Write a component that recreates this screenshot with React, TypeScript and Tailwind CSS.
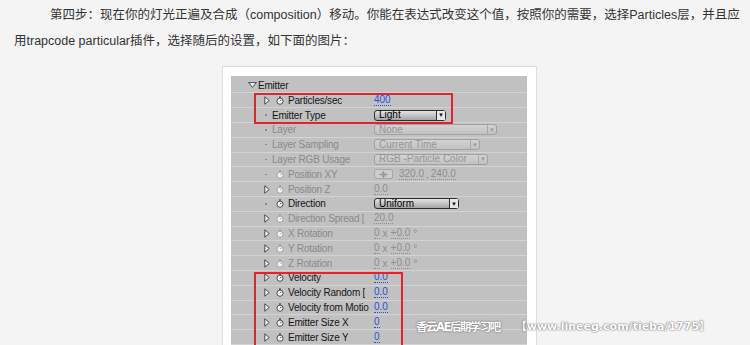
import React from 'react';

type Row = {
  label: string;
  lead: 'arrow' | 'dot';
  watch?: boolean;
  on?: boolean;
  kind: 'num' | 'drop' | 'xy' | 'rot';
  value?: string;
  width?: number;
};

const rows: Row[] = [
  { label: 'Particles/sec', lead: 'arrow', watch: true, on: true, kind: 'num', value: '400' },
  { label: 'Emitter Type', lead: 'dot', on: true, kind: 'drop', value: 'Light', width: 72 },
  { label: 'Layer', lead: 'dot', kind: 'drop', value: 'None', width: 123 },
  { label: 'Layer Sampling', lead: 'dot', kind: 'drop', value: 'Current Time', width: 106 },
  { label: 'Layer RGB Usage', lead: 'dot', kind: 'drop', value: 'RGB -Particle Color', width: 114 },
  { label: 'Position XY', lead: 'dot', watch: true, kind: 'xy' },
  { label: 'Position Z', lead: 'arrow', watch: true, kind: 'num', value: '0.0' },
  { label: 'Direction', lead: 'dot', watch: true, on: true, kind: 'drop', value: 'Uniform', width: 85 },
  { label: 'Direction Spread [', lead: 'arrow', watch: true, kind: 'num', value: '20.0' },
  { label: 'X Rotation', lead: 'arrow', watch: true, kind: 'rot' },
  { label: 'Y Rotation', lead: 'arrow', watch: true, kind: 'rot' },
  { label: 'Z Rotation', lead: 'arrow', watch: true, kind: 'rot' },
  { label: 'Velocity', lead: 'arrow', watch: true, on: true, kind: 'num', value: '0.0' },
  { label: 'Velocity Random [', lead: 'arrow', watch: true, on: true, kind: 'num', value: '0.0' },
  { label: 'Velocity from Motio', lead: 'arrow', watch: true, on: true, kind: 'num', value: '0.0' },
  { label: 'Emitter Size X', lead: 'arrow', watch: true, on: true, kind: 'num', value: '0' },
  { label: 'Emitter Size Y', lead: 'arrow', watch: true, on: true, kind: 'num', value: '0' },
];

function Arrow() {
  return (
    <svg width="6" height="9" viewBox="0 0 6 9">
      <path d="M0.8 0.8 L5.2 4.5 L0.8 8.2 Z" fill="#f2f2f2" stroke="#3a3a3a" strokeWidth="0.9" />
    </svg>
  );
}

function Watch({ on }: { on?: boolean }) {
  const c = on ? '#3c3c3c' : '#9a9a9a';
  return (
    <svg width="8" height="9" viewBox="0 0 8 9">
      <rect x="3.2" y="0.3" width="1.6" height="1.6" fill={c} />
      <circle cx="4" cy="5.2" r="3.1" fill="#f4f4f4" stroke={c} strokeWidth="0.9" />
      <path d="M4 5.2 L5.4 3.8" stroke={c} strokeWidth="0.9" />
    </svg>
  );
}

function Dropdown({ text, width, on }: { text: string; width: number; on?: boolean }) {
  return (
    <div
      style={{ width }}
      className={
        on
          ? 'flex h-[11px] items-center rounded-[3px] border border-[#2e2e2e] bg-gradient-to-b from-[#e4e4e4] to-[#a4a4a4]'
          : 'flex h-[11px] items-center rounded-[3px] border border-[#a2a2a2] bg-gradient-to-b from-[#d2d2d2] to-[#c2c2c2]'
      }
    >
      <span
        className={
          on
            ? 'flex-1 pl-[4px] text-[10px] leading-none text-[#000]'
            : 'flex-1 pl-[4px] text-[10px] leading-none text-[#969696]'
        }
      >
        {text}
      </span>
      <span
        className={
          on
            ? 'flex h-full w-[9px] items-center justify-center border-l border-[#2e2e2e] bg-[#e8e8e8] text-[6px] leading-none text-[#111]'
            : 'flex h-full w-[9px] items-center justify-center border-l border-[#a8a8a8] text-[6px] leading-none text-[#9a9a9a]'
        }
      >
        ▼
      </span>
    </div>
  );
}

function Num({ v, on }: { v: string; on?: boolean }) {
  return (
    <span
      className={
        on
          ? 'border-b border-dotted border-[#2c4fd6] leading-[10px] text-[#2c4fd6]'
          : 'border-b border-dotted border-[#8e8e8e] leading-[10px] text-[#8e8e8e]'
      }
    >
      {v}
    </span>
  );
}

function Value({ r }: { r: Row }) {
  if (r.kind === 'drop') return <Dropdown text={r.value!} width={r.width!} on={r.on} />;
  if (r.kind === 'num') return <Num v={r.value!} on={r.on} />;
  if (r.kind === 'xy')
    return (
      <div className="flex items-center gap-[6px]">
        <span className="flex h-[10px] w-[19px] items-center justify-center rounded-[2px] border border-[#a6a6a6] bg-[#cdcdcd]">
          <svg width="9" height="7" viewBox="0 0 9 7">
            <circle cx="4.5" cy="3.5" r="2" fill="none" stroke="#8a8a8a" strokeWidth="0.8" />
            <path d="M0 3.5 H9 M4.5 0 V7" stroke="#8a8a8a" strokeWidth="0.7" />
          </svg>
        </span>
        <span className="flex items-center gap-[2px] text-[#8e8e8e]">
          <Num v="320.0" />
          <span>,</span>
          <Num v="240.0" />
        </span>
      </div>
    );
  return (
    <span className="flex items-center gap-[3px] text-[#8e8e8e]">
      <Num v="0" />
      <span>x</span>
      <Num v="+0.0" />
      <span>°</span>
    </span>
  );
}

function ParamRow({ r }: { r: Row }) {
  return (
    <div className="flex h-[14.8px] items-center border-b border-[#d3d3d3]">
      <div className="flex w-[143px] items-center pl-[33px]">
        <span className={r.watch ? 'flex w-[12px] items-center' : 'flex w-[8px] items-center'}>
          {r.lead === 'arrow' ? <Arrow /> : <span className="ml-[1px] h-[1.5px] w-[1.5px] bg-[#8a8a8a]" />}
        </span>
        {r.watch && (
          <span className="flex w-[12px] items-center">
            <Watch on={r.on} />
          </span>
        )}
        <span
          className={
            r.on
              ? 'overflow-hidden whitespace-nowrap text-[10px] tracking-[-0.2px] text-[#161616]'
              : 'overflow-hidden whitespace-nowrap text-[10px] tracking-[-0.2px] text-[#8a8a8a]'
          }
        >
          {r.label}
        </span>
      </div>
      <div className="flex items-center text-[10px]">
        <Value r={r} />
      </div>
    </div>
  );
}

export default function App() {
  return (
    <div className="relative h-[345px] w-[750px] overflow-hidden bg-[#f4f4f4] font-['Liberation_Sans','Noto_Sans_CJK_SC',sans-serif]">
      <p className="whitespace-nowrap pl-[14px] pt-[2px] text-[12.5px] leading-[26px] text-[#333] [text-indent:36px]">
        第四步：现在你的灯光正遍及合成（composition）移动。你能在表达式改变这个值，按照你的需要，选择Particles层，并且应
        <br />
        用trapcode particular插件，选择随后的设置，如下面的图片：
      </p>

      <div className="ml-[222px] mt-[12px] w-[315px] border border-[#dedede] bg-white pb-[20px] pl-[8px] pr-[9px] pt-[9px]">
        <div className="relative w-[296px] bg-[#c1c1c1] pt-[2.6px]">
          <div className="flex h-[14.8px] items-center border-b border-[#d3d3d3] pl-[17px]">
            <svg width="9" height="6" viewBox="0 0 9 6">
              <path d="M0.6 0.6 L8.4 0.6 L4.5 5.4 Z" fill="#f2f2f2" stroke="#3a3a3a" strokeWidth="0.9" />
            </svg>
            <span className="ml-[1px] text-[10px] tracking-[-0.2px] text-[#161616]">Emitter</span>
          </div>
          {rows.map((r) => (
            <ParamRow key={r.label} r={r} />
          ))}

          <div className="absolute left-[23px] top-[17px] h-[31px] w-[199px] border-2 border-[#e1232b]" />
          <div className="absolute left-[23px] top-[196px] h-[120px] w-[149px] border-2 border-[#e1232b]" />
        </div>
      </div>

      <div className="absolute left-[416px] top-[319px] flex items-center whitespace-nowrap font-['DejaVu_Sans','Noto_Sans_CJK_SC',sans-serif] font-bold text-white [text-shadow:0_0_1px_#666,0_0_2px_#777]">
        <span className="text-[11.5px] tracking-[-1.5px]">香云AE后期学习吧</span>
        <span className="ml-[16px] text-[11px]">【www.lineeg.com/tieba/1775】</span>
      </div>
    </div>
  );
}
